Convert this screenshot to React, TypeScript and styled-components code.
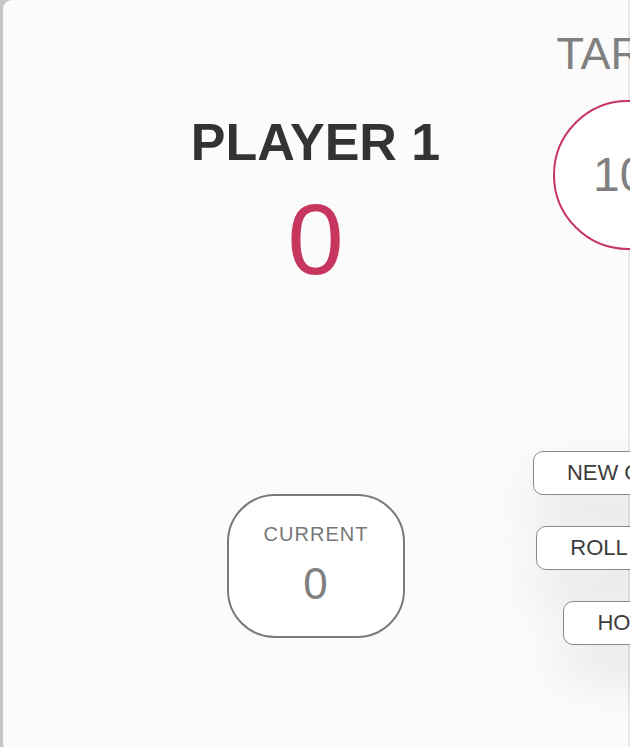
import React from 'react';
import styled, { createGlobalStyle } from 'styled-components';

const GlobalStyle = createGlobalStyle`
  html, body {
    margin: 0;
    padding: 0;
    overflow: hidden;
  }

  body {
    background: #c9c5c5;
    font-family: "Liberation Sans", Arial, sans-serif;
  }
`;

const Board = styled.main`
  position: relative;
  display: flex;
  width: 1254px;
  height: 752px;
  margin-left: 3px;
  border-radius: 9px;
  overflow: hidden;
`;

const PlayerPanel = styled.section<{ $active?: boolean }>`
  display: flex;
  flex-direction: column;
  align-items: center;
  width: ${({ $active }) => ($active ? '625px' : 'auto')};
  flex: ${({ $active }) => ($active ? '0 0 auto' : '1')};
  padding-top: 116px;
  box-sizing: border-box;
  background: ${({ $active }) => ($active ? '#fbfbfb' : '#ece8e8')};
`;

const PlayerName = styled.h2`
  margin: 0;
  font-size: 52px;
  line-height: 1;
  font-weight: 700;
  color: #333333;
  text-transform: uppercase;
`;

const Score = styled.p`
  margin: 21px 0 0;
  font-size: 101px;
  line-height: 1;
  font-weight: 400;
  color: #c7365f;
`;

const CurrentBox = styled.div`
  display: flex;
  flex-direction: column;
  align-items: center;
  width: 178px;
  height: 144px;
  margin-top: 204px;
  padding-top: 28px;
  box-sizing: border-box;
  background: #ffffff;
  border: 2px solid #7a7a7a;
  border-radius: 48px;
`;

const CurrentLabel = styled.p`
  margin: 0;
  font-size: 20px;
  line-height: 1;
  letter-spacing: 1px;
  margin-right: -1px;
  color: #777777;
  text-transform: uppercase;
`;

const CurrentScore = styled.p`
  margin: 18px 0 0;
  font-size: 44px;
  line-height: 1;
  color: #808080;
`;

const Controls = styled.div`
  position: absolute;
  top: 0;
  left: 625px;
  transform: translateX(-50%);
  width: 280px;
  display: flex;
  flex-direction: column;
  align-items: center;
`;

const TargetLabel = styled.h3`
  margin: 31px 0 0;
  padding-left: 36px;
  font-size: 45px;
  line-height: 1;
  font-weight: 400;
  color: #808080;
`;

const TargetCircle = styled.div`
  display: flex;
  align-items: center;
  justify-content: center;
  width: 150px;
  height: 150px;
  margin-top: 24px;
  padding-left: 10px;
  box-sizing: border-box;
  background: #ffffff;
  border: 2px solid #c7365f;
  border-radius: 50%;
  font-size: 48px;
  line-height: 1;
  color: #808080;
`;

const ButtonStack = styled.div`
  display: flex;
  flex-direction: column;
  align-items: center;
  gap: 31px;
  margin-top: 201px;
`;

const GameButton = styled.button`
  height: 44px;
  padding: 0 33px;
  box-sizing: border-box;
  background: #ffffff;
  border: 1px solid #8a8a8a;
  border-radius: 10px;
  box-shadow: 0 28px 56px rgba(0, 0, 0, 0.1);
  font-family: "Liberation Sans", Arial, sans-serif;
  font-size: 22px;
  line-height: 1;
  color: #3d3d3d;
  text-transform: uppercase;
  white-space: nowrap;
  cursor: pointer;
`;

const App: React.FC = () => {
  return (
    <>
      <GlobalStyle />
      <Board>
        <PlayerPanel $active>
          <PlayerName>Player 1</PlayerName>
          <Score>0</Score>
          <CurrentBox>
            <CurrentLabel>Current</CurrentLabel>
            <CurrentScore>0</CurrentScore>
          </CurrentBox>
        </PlayerPanel>

        <PlayerPanel>
          <PlayerName>Player 2</PlayerName>
          <Score>0</Score>
          <CurrentBox>
            <CurrentLabel>Current</CurrentLabel>
            <CurrentScore>0</CurrentScore>
          </CurrentBox>
        </PlayerPanel>

        <Controls>
          <TargetLabel>TARGET</TargetLabel>
          <TargetCircle>100</TargetCircle>
          <ButtonStack>
            <GameButton>New game</GameButton>
            <GameButton>Roll dice</GameButton>
            <GameButton>Hold</GameButton>
          </ButtonStack>
        </Controls>
      </Board>
    </>
  );
};

export default App;
